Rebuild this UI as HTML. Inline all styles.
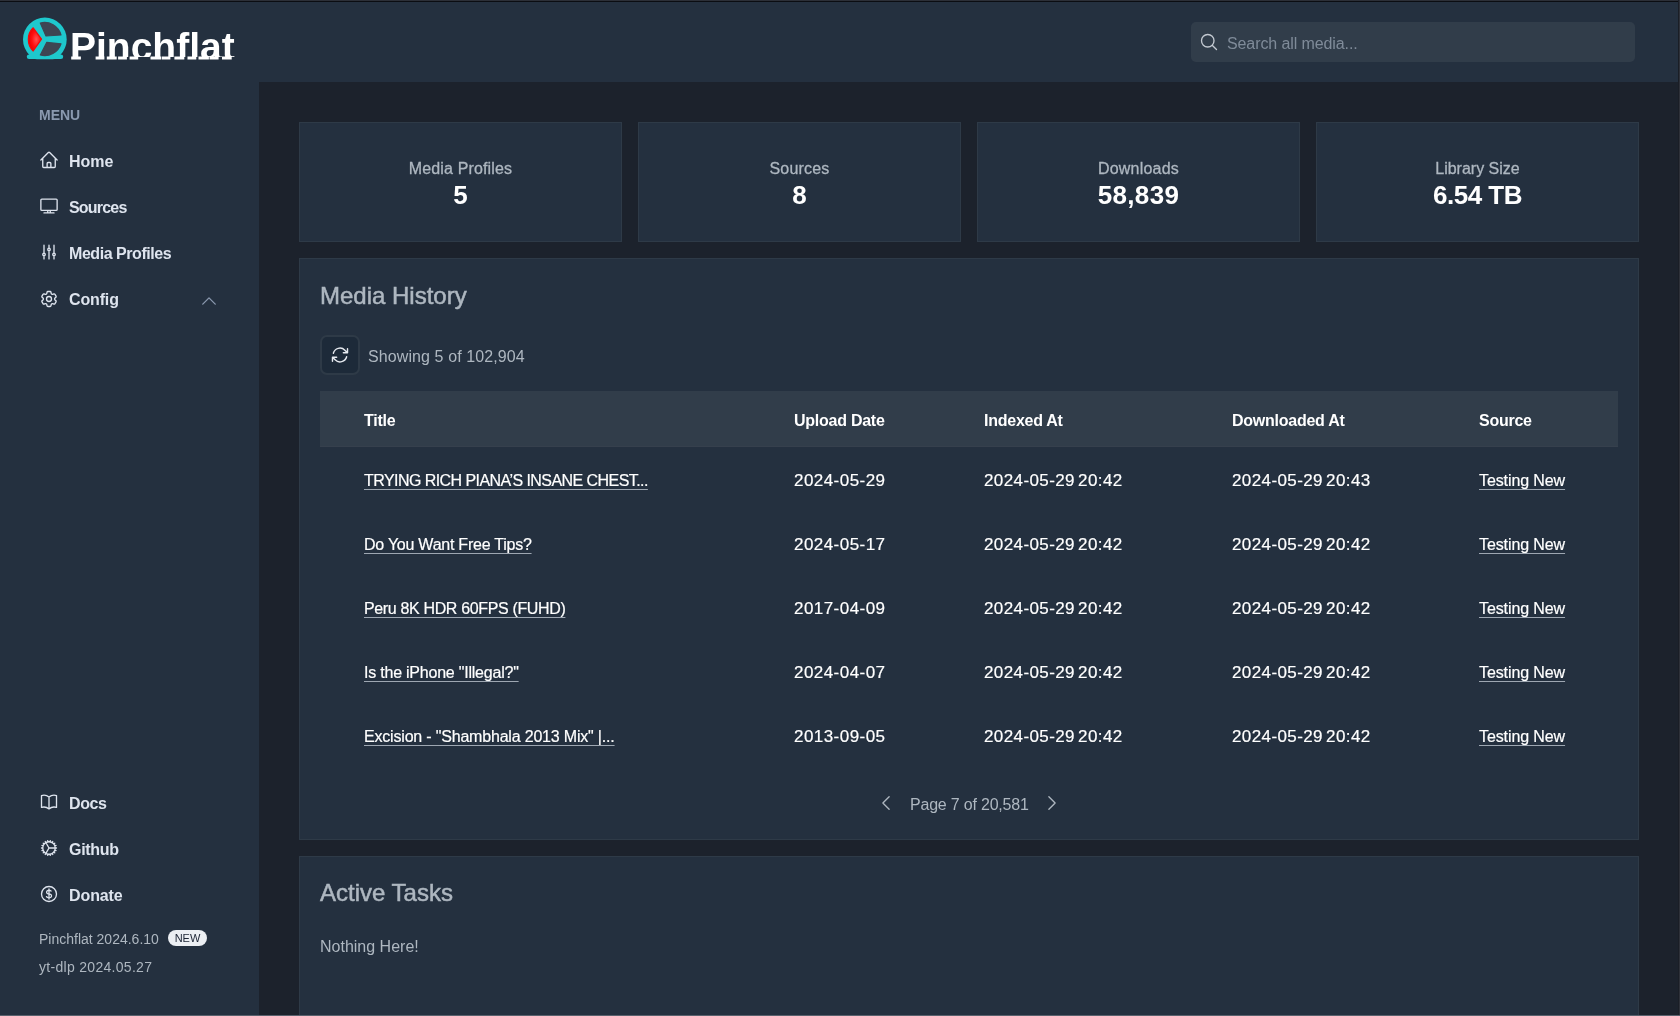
<!DOCTYPE html>
<html><head><meta charset="utf-8">
<style>
*{margin:0;padding:0;box-sizing:border-box}
html,body{width:1680px;height:1016px;overflow:hidden;-webkit-font-smoothing:antialiased;background:#1c222c;font-family:"Liberation Sans",sans-serif;}
.a{position:absolute;white-space:nowrap;line-height:1}
#sidebar{left:0;top:0;width:259px;height:1016px;background:#24303f}
#header{left:259px;top:0;width:1421px;height:82px;background:#24303f}
#top{left:0;top:0;width:1680px;height:2px;background:#0b0d12;border-top:1px solid #2c2f37}
#right{left:1678px;top:0;width:2px;height:1016px;background:#2e3139;border-left:1px solid #1a1e26}
#bottom{left:0;top:1015px;width:1680px;height:1px;background:#59616d}
.logotext{left:70px;top:24px;width:175px;height:32.5px;overflow:hidden;color:#fff;font-weight:bold;font-size:39px;line-height:46px}
.menu{left:39px;font-size:14px;color:#8a99af;font-weight:bold}
.nav{left:69px;color:#dee4ee;font-size:16px;font-weight:bold}
.ic{position:absolute;fill:none;stroke-linecap:round;stroke-linejoin:round}
.ver{left:39px;font-size:14px;color:#aeb7c0}
.badge{left:168px;top:930px;width:39px;height:16px;border-radius:8px;background:#eceff3;color:#1c2434;font-size:11px;line-height:16px;text-align:center}
#search{left:1191px;top:22px;width:444px;height:40px;border-radius:5px;background:#313d4a}
.ph{left:1227px;font-size:16px;color:#7f8b99}
.card{position:absolute;background:#24303f;border:1px solid #2e3a47}
.stat{top:122px;width:323px;height:120px}
.st{font-size:16px;color:#aeb7c0;text-align:center;width:323px;-webkit-text-stroke:0.3px #aeb7c0}
.sv{font-size:26px;color:#fff;font-weight:bold;text-align:center;width:323px}
.h2{left:320px;font-size:24px;color:#aeb7c0;-webkit-text-stroke:0.5px #aeb7c0}
.btn{position:absolute;left:320px;top:335px;width:40px;height:40px;border-radius:7px;background:#1d2a39;border:2px solid #2e3a47}
.muted{font-size:16px;color:#aeb7c0}
.th{position:absolute;top:391px;left:320px;width:1298px;height:56px;background:#313d4a;border-bottom:1px solid #36404d}
.hd{font-size:16px;font-weight:bold;color:#fff;letter-spacing:-0.25px}
.td{font-size:16px;color:#fff;-webkit-text-stroke:0.2px #fff}
.dt{font-size:17px;letter-spacing:0.45px}
.tm{font-size:17px;letter-spacing:0.4px;word-spacing:-2px}
.u{text-decoration:underline;text-underline-offset:3px;text-decoration-thickness:1px;text-decoration-color:#9ea7b2}
</style></head><body><div style="position:absolute;left:0;top:0;width:1680px;height:1016px;will-change:transform">
<div id="sidebar" class="a"></div>
<div id="header" class="a"></div>

<!-- logo -->
<svg class="a" style="left:18px;top:12px" width="54" height="54" viewBox="18 12 54 54">
  <defs><radialGradient id="rg" cx="0.6" cy="0.5" r="0.6"><stop offset="0" stop-color="#ff5050"/><stop offset="0.55" stop-color="#ff1010"/><stop offset="1" stop-color="#e80000"/></radialGradient>
  <clipPath id="cp"><rect x="18" y="12" width="54" height="47.2"/></clipPath></defs>
  <circle cx="44.85" cy="39.45" r="21.85" fill="#1ec8cd" clip-path="url(#cp)"/>
  <rect x="26.8" y="54.4" width="36.4" height="4.7" rx="2.3" fill="#1ec8cd"/>
  <g stroke-linejoin="round" stroke-width="1.2">
  <path d="M33.2 27.8 L41.5 39.1 L33.2 51.0 A16.2 16.2 0 0 1 33.2 27.8 Z" fill="url(#rg)" stroke="#f20a0a"/>
  <path d="M40.3 23.0 A17.1 17.1 0 0 1 61.0 35.0 L46.0 36.0 Z" fill="#3e4553" stroke="#3e4553"/>
  <path d="M46.8 42.4 L61.0 43.8 A17.1 17.1 0 0 1 40.3 55.0 Z" fill="#3e4553" stroke="#3e4553"/>
  </g>
</svg>
<div class="a logotext">Pinchflat</div>
<svg class="a" style="left:60px;top:50px" width="190" height="12" viewBox="60 50 190 12"><rect x="71.2" y="56.5" width="9.7" height="3" fill="#fff"/><rect x="95.6" y="56.5" width="8.8" height="3" fill="#fff"/><rect x="106.8" y="56.5" width="9.9" height="3" fill="#fff"/><rect x="118.1" y="56.5" width="8.8" height="3" fill="#fff"/><rect x="129.6" y="56.5" width="8.6" height="3" fill="#fff"/><rect x="150.5" y="56.5" width="10.7" height="3" fill="#fff"/><rect x="161.8" y="56.5" width="8.6" height="3" fill="#fff"/><rect x="174.4" y="56.5" width="9.9" height="3" fill="#fff"/><rect x="187.5" y="56.5" width="8.8" height="3" fill="#fff"/><rect x="198.5" y="56.5" width="10.4" height="3" fill="#fff"/><rect x="209.5" y="56.5" width="9.1" height="3" fill="#fff"/><rect x="222" y="56.5" width="9.7" height="3" fill="#fff"/></svg>

<div class="a menu" style="top:108px">MENU</div>

<!-- nav icons -->
<svg class="ic" style="left:39px;top:150px" width="20" height="20" viewBox="0 0 24 24" stroke="#dee4ee" stroke-width="1.6"><path d="m2.25 12 8.954-8.955c.44-.439 1.152-.439 1.591 0L21.75 12M4.5 9.75v10.125c0 .621.504 1.125 1.125 1.125H9.75v-4.875c0-.621.504-1.125 1.125-1.125h2.25c.621 0 1.125.504 1.125 1.125V21h4.125c.621 0 1.125-.504 1.125-1.125V9.75M8.25 21h8.25"/></svg>
<div class="a nav" style="top:154px">Home</div>

<svg class="ic" style="left:39px;top:196px" width="20" height="20" viewBox="0 0 24 24" stroke="#dee4ee" stroke-width="1.6"><path d="M6 20.25h12m-7.5-3v3m3-3v3m-10.125-3h17.25c.621 0 1.125-.504 1.125-1.125V4.875c0-.621-.504-1.125-1.125-1.125H3.375c-.621 0-1.125.504-1.125 1.125v11.25c0 .621.504 1.125 1.125 1.125Z"/></svg>
<div class="a nav" style="top:200px;letter-spacing:-0.8px">Sources</div>

<svg class="ic" style="left:39px;top:242px" width="20" height="20" viewBox="0 0 24 24" stroke="#dee4ee" stroke-width="1.6"><path d="M6 13.5V3.75m0 9.75a1.5 1.5 0 0 1 0 3m0-3a1.5 1.5 0 0 0 0 3m0 3.75V16.5m12-3V3.75m0 9.75a1.5 1.5 0 0 1 0 3m0-3a1.5 1.5 0 0 0 0 3m0 3.75V16.5m-6-9V3.75m0 3.75a1.5 1.5 0 0 1 0 3m0-3a1.5 1.5 0 0 0 0 3m0 9.75V10.5"/></svg>
<div class="a nav" style="top:246px;letter-spacing:-0.45px">Media Profiles</div>

<svg class="ic" style="left:39px;top:289px" width="20" height="20" viewBox="0 0 24 24" stroke="#dee4ee" stroke-width="1.6"><path d="M9.594 3.94c.09-.542.56-.94 1.11-.94h2.593c.55 0 1.02.398 1.11.94l.213 1.281c.063.374.313.686.645.87.074.04.147.083.22.127.325.196.72.257 1.075.124l1.217-.456a1.125 1.125 0 0 1 1.37.49l1.296 2.247a1.125 1.125 0 0 1-.26 1.431l-1.003.827c-.293.241-.438.613-.43.992a7.723 7.723 0 0 1 0 .255c-.008.378.137.75.43.991l1.004.827c.424.35.534.955.26 1.43l-1.298 2.247a1.125 1.125 0 0 1-1.369.491l-1.217-.456c-.355-.133-.75-.072-1.076.124a6.47 6.470 0 0 1-.22.128c-.331.183-.581.495-.644.869l-.213 1.281c-.09.543-.56.94-1.11.94h-2.594c-.55 0-1.019-.398-1.11-.94l-.213-1.281c-.062-.374-.312-.686-.644-.87a6.52 6.52 0 0 1-.22-.127c-.325-.196-.72-.257-1.076-.124l-1.217.456a1.125 1.125 0 0 1-1.369-.49l-1.297-2.247a1.125 1.125 0 0 1 .26-1.431l1.004-.827c.292-.24.437-.613.43-.991a6.932 6.932 0 0 1 0-.255c.007-.38-.138-.751-.43-.992l-1.004-.827a1.125 1.125 0 0 1-.26-1.43l1.297-2.247a1.125 1.125 0 0 1 1.37-.491l1.216.456c.356.133.751.072 1.076-.124.072-.044.146-.086.22-.128.332-.183.582-.495.644-.869l.214-1.28Z"/><path d="M15 12a3 3 0 1 1-6 0 3 3 0 0 1 6 0Z"/></svg>
<div class="a nav" style="top:292px;letter-spacing:-0.15px">Config</div>
<svg class="ic" style="left:199px;top:291px" width="20" height="20" viewBox="0 0 24 24" stroke="#8a99af" stroke-width="1.6"><path d="m4.5 15.75 7.5-7.5 7.5 7.5"/></svg>

<svg class="ic" style="left:39px;top:792px" width="20" height="20" viewBox="0 0 24 24" stroke="#dee4ee" stroke-width="1.6"><path d="M12 6.042A8.967 8.967 0 0 0 6 3.75c-1.052 0-2.062.18-3 .512v14.25A8.987 8.987 0 0 1 6 18c2.305 0 4.408.867 6 2.292m0-14.25a8.966 8.966 0 0 1 6-2.292c1.052 0 2.062.18 3 .512v14.25A8.987 8.987 0 0 0 18 18a8.974 8.974 0 0 0-6 2.292m0-14.250v14.25"/></svg>
<div class="a nav" style="top:796px;letter-spacing:-0.4px">Docs</div>

<svg class="ic" style="left:39px;top:838px" width="20" height="20" viewBox="0 0 24 24" stroke="#dee4ee" stroke-width="1.6"><path d="M4.5 12a7.5 7.5 0 0 0 15 0m-15 0a7.5 7.5 0 1 1 15 0m-15 0H3m16.5 0H21m-1.5 0H12m-8.457 3.077 1.41-.513m14.095-5.13 1.41-.513M5.106 17.785l1.15-.964m11.49-9.642 1.149-.964M7.501 19.795l.75-1.3m7.5-12.99.75-1.3m-6.063 16.658.26-1.477m2.605-14.772.26-1.477m0 17.726-.26-1.477M10.698 4.614l-.26-1.477M16.5 19.794l-.75-1.299M7.5 4.205 12 12m6.894 5.785-1.149-.964M6.256 7.178l-1.150-.964m15.352 8.864-1.410-.513M4.954 9.435l-1.410-.514M12.002 12l-3.750 6.495"/></svg>
<div class="a nav" style="top:842px;letter-spacing:-0.3px">Github</div>

<svg class="ic" style="left:39px;top:884px" width="20" height="20" viewBox="0 0 24 24" stroke="#dee4ee" stroke-width="1.6"><path d="M12 6v12m-3-2.818.879.659c1.171.879 3.07.879 4.242 0 1.172-.879 1.172-2.303 0-3.182C13.536 12.219 12.768 12 12 12c-.725 0-1.450-.22-2.003-.659-1.106-.879-1.106-2.303 0-3.182s2.900-.879 4.006 0l.415.33M21 12a9 9 0 1 1-18 0 9 9 0 0 1 18 0Z"/></svg>
<div class="a nav" style="top:888px;letter-spacing:-0.1px">Donate</div>

<div class="a ver" style="top:932px">Pinchflat 2024.6.10</div>
<div class="a badge">NEW</div>
<div class="a ver" style="top:960px;letter-spacing:0.3px">yt-dlp 2024.05.27</div>

<!-- search -->
<div id="search" class="a"></div>
<svg class="ic" style="left:1199px;top:32px" width="20" height="20" viewBox="0 0 24 24" stroke="#c3c9d1" stroke-width="1.6"><path d="m21 21-5.197-5.197m0 0A7.5 7.5 0 1 0 5.196 5.196a7.5 7.5 0 0 0 10.607 10.607Z"/></svg>
<div class="a ph" style="top:36px;letter-spacing:-0.1px">Search all media...</div>

<!-- stat cards -->
<div class="card stat" style="left:299px"></div>
<div class="a st" style="left:299px;top:161px;letter-spacing:0.15px">Media Profiles</div>
<div class="a sv" style="left:299px;top:182px">5</div>
<div class="card stat" style="left:638px"></div>
<div class="a st" style="left:638px;top:161px;letter-spacing:0.2px">Sources</div>
<div class="a sv" style="left:638px;top:182px">8</div>
<div class="card stat" style="left:977px"></div>
<div class="a st" style="left:977px;top:161px;letter-spacing:0.2px">Downloads</div>
<div class="a sv" style="left:977px;top:182px;letter-spacing:0.3px">58,839</div>
<div class="card stat" style="left:1316px"></div>
<div class="a st" style="left:1316px;top:161px">Library Size</div>
<div class="a sv" style="left:1316px;top:182px;letter-spacing:-0.5px">6.54 TB</div>

<!-- media history -->
<div class="card" style="left:299px;top:258px;width:1340px;height:582px"></div>
<div class="a h2" style="top:284px">Media History</div>
<div class="btn"></div>
<svg class="ic" style="left:330px;top:345px" width="20" height="20" viewBox="0 0 24 24" stroke="#e6eaf0" stroke-width="1.7"><path d="M16.023 9.348h4.992v-.001M2.985 19.644v-4.992m0 0h4.992m-4.993 0 3.181 3.183a8.25 8.25 0 0 0 13.803-3.7M4.031 9.865a8.25 8.25 0 0 1 13.803-3.7l3.181 3.182m0-4.991v4.99"/></svg>
<div class="a muted" style="left:368px;top:349px;letter-spacing:0.1px">Showing 5 of 102,904</div>

<div class="th"></div>
<div class="a hd" style="left:364px;top:413px">Title</div>
<div class="a hd" style="left:794px;top:413px">Upload Date</div>
<div class="a hd" style="left:984px;top:413px">Indexed At</div>
<div class="a hd" style="left:1232px;top:413px">Downloaded At</div>
<div class="a hd" style="left:1479px;top:413px">Source</div>

<div class="a td u" style="left:364px;top:473px;letter-spacing:-0.56px">TRYING RICH PIANA’S INSANE CHEST...</div>
<div class="a td dt" style="left:794px;top:472px">2024-05-29</div>
<div class="a td tm" style="left:984px;top:472px">2024-05-29 20:42</div>
<div class="a td tm" style="left:1232px;top:472px">2024-05-29 20:43</div>
<div class="a td u" style="left:1479px;top:473px;letter-spacing:-0.1px">Testing New</div>
<div class="a td u" style="left:364px;top:537px;letter-spacing:-0.24px">Do You Want Free Tips?</div>
<div class="a td dt" style="left:794px;top:536px">2024-05-17</div>
<div class="a td tm" style="left:984px;top:536px">2024-05-29 20:42</div>
<div class="a td tm" style="left:1232px;top:536px">2024-05-29 20:42</div>
<div class="a td u" style="left:1479px;top:537px;letter-spacing:-0.1px">Testing New</div>
<div class="a td u" style="left:364px;top:601px;letter-spacing:-0.35px">Peru 8K HDR 60FPS (FUHD)</div>
<div class="a td dt" style="left:794px;top:600px">2017-04-09</div>
<div class="a td tm" style="left:984px;top:600px">2024-05-29 20:42</div>
<div class="a td tm" style="left:1232px;top:600px">2024-05-29 20:42</div>
<div class="a td u" style="left:1479px;top:601px;letter-spacing:-0.1px">Testing New</div>
<div class="a td u" style="left:364px;top:665px;letter-spacing:-0.22px">Is the iPhone &quot;Illegal?&quot;</div>
<div class="a td dt" style="left:794px;top:664px">2024-04-07</div>
<div class="a td tm" style="left:984px;top:664px">2024-05-29 20:42</div>
<div class="a td tm" style="left:1232px;top:664px">2024-05-29 20:42</div>
<div class="a td u" style="left:1479px;top:665px;letter-spacing:-0.1px">Testing New</div>
<div class="a td u" style="left:364px;top:729px;letter-spacing:-0.19px">Excision - &quot;Shambhala 2013 Mix&quot; |...</div>
<div class="a td dt" style="left:794px;top:728px">2013-09-05</div>
<div class="a td tm" style="left:984px;top:728px">2024-05-29 20:42</div>
<div class="a td tm" style="left:1232px;top:728px">2024-05-29 20:42</div>
<div class="a td u" style="left:1479px;top:729px;letter-spacing:-0.1px">Testing New</div>

<svg class="ic" style="left:876px;top:793px" width="20" height="20" viewBox="0 0 24 24" stroke="#aeb7c0" stroke-width="1.6"><path d="M15.75 19.5 8.25 12l7.5-7.5"/></svg>
<div class="a muted" style="left:910px;top:797px;letter-spacing:-0.2px">Page 7 of 20,581</div>
<svg class="ic" style="left:1042px;top:793px" width="20" height="20" viewBox="0 0 24 24" stroke="#aeb7c0" stroke-width="1.6"><path d="m8.25 4.5 7.5 7.5-7.5 7.5"/></svg>

<!-- active tasks -->
<div class="card" style="left:299px;top:856px;width:1340px;height:170px"></div>
<div class="a h2" style="top:881px">Active Tasks</div>
<div class="a muted" style="left:320px;top:939px">Nothing Here!</div>

<div id="top" class="a"></div>
<div id="right" class="a"></div>
<div id="bottom" class="a"></div>
</div></body></html>
